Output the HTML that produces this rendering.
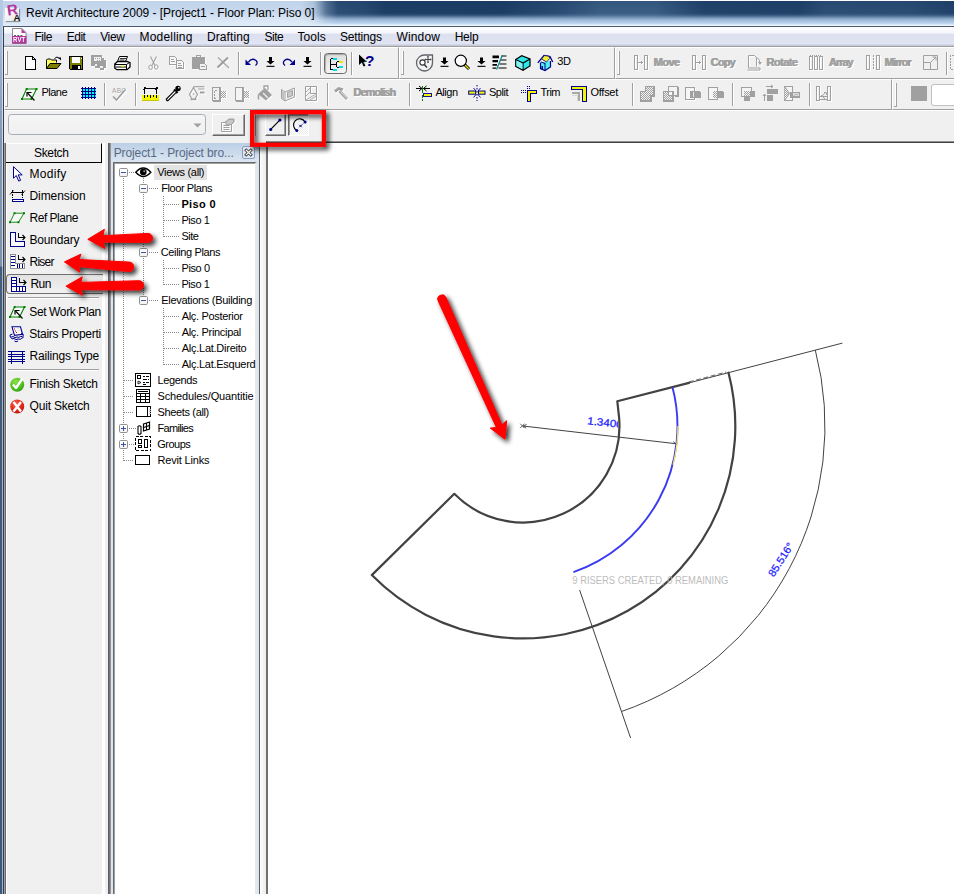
<!DOCTYPE html>
<html><head><meta charset="utf-8"><title>Revit Architecture 2009 - [Project1 - Floor Plan: Piso 0]</title>
<style>
*{box-sizing:border-box}
html,body{margin:0;padding:0}
body{width:954px;height:894px;overflow:hidden;position:relative;background:#f0f0f0;font-family:"Liberation Sans",sans-serif;font-size:12px;color:#000}
.a{position:absolute}
.t{position:absolute;white-space:nowrap}
svg{position:absolute;overflow:visible}
#title{left:0;top:0;width:954px;height:26px;background:linear-gradient(to bottom,#fff 0,#fff 1px,#35587f 1.5px,#3d6088 13px,#4a6d95 15px,#9db8d6 20px,#c3dbf4 24px,#e8f1fb 25px,#f4f8fd 26px)}
#titlex{left:0;top:1px;width:954px;height:17px;background:linear-gradient(to right,rgba(16,48,88,0) 312px,rgba(12,44,84,.3) 330px,rgba(12,44,84,.42) 365px,rgba(12,44,84,.64) 385px,rgba(12,44,84,.66) 500px,rgba(12,44,84,.35) 560px,rgba(16,48,88,.04) 600px,rgba(16,48,88,.04) 655px,rgba(12,44,84,.55) 705px,rgba(12,44,84,.58) 800px,rgba(16,48,88,.35) 825px,rgba(16,48,88,.4) 910px,rgba(12,44,84,.55) 954px);-webkit-mask-image:linear-gradient(to bottom,#000 0,#000 72%,transparent 100%)}
#glow{left:0;top:1px;width:380px;height:25px;background:linear-gradient(to bottom,#c0d3ea 0,#c8d9ee 10px,#d8e5f4 18px,#e0ebf7 24px);-webkit-mask-image:linear-gradient(to right,#000 0,#000 300px,rgba(0,0,0,.85) 314px,rgba(0,0,0,.25) 326px,transparent 338px)}
#lb{left:0;top:0;width:3px;height:894px;background:linear-gradient(to bottom,#b5cbe6 0,#b0c5e0 26px,#9db1cc 60px,#8497b2 140px,#8092aa 266px,#455d7d 267px,#435b7b 480px,#3f5878 894px)}
#lb2{left:2px;top:26px;width:1px;height:868px;background:linear-gradient(to bottom,#d0dae8 0,#ccd6e2 240px,#a8b6c8 242px,#a4b4cc 100%)}
#wb{left:3px;top:26px;width:951px;height:868px;border-left:1px solid #2d3e55;border-top:1px solid #4a5a72}
#menu{left:4px;top:27px;width:950px;height:19px;background:linear-gradient(to bottom,#fff 0,#f3f5fb 6px,#dcdfef 7.5px,#e1e4f2 17px,#c5c9d9 18px,#c5c9d9 19px)}
.band{position:absolute;border-top:1px solid #fff;border-left:1px solid #fff;border-bottom:1px solid #a0a0a0;border-right:1px solid #a0a0a0}
.grip{position:absolute;width:3px;height:24px;border-right:1px solid #a0a0a0;border-bottom:1px solid #a0a0a0;border-left:0;background:linear-gradient(to right,transparent 0,transparent 1px,#fff 1px,#fff 2px)}
.sep{position:absolute;width:2px;height:23px;border-left:1px solid #a0a0a0;border-right:1px solid #fff}
.hsep{position:absolute;height:2px;border-top:1px solid #a0a0a0;border-bottom:1px solid #fff}
.btn{position:absolute;border:1px solid;border-color:#fff #696969 #696969 #fff;background:#f0f0f0;box-shadow:inset -1px -1px 0 #a0a0a0}

</style></head><body>
<div class="a" id="title"></div>
<div class="a" id="titlex"></div>
<div class="a" id="glow"></div>
<div class="a" id="lb"></div><div class="a" id="lb2"></div>
<div class="a" id="wb"></div>
<div class="a" id="menu"></div>
<!-- toolbars -->
<div class="a" style="left:4px;top:46px;width:950px;height:1px;background:#a0a0a0"></div>
<div class="band" style="left:4px;top:47px;width:395px;height:32px"></div>
<div class="band" style="left:399px;top:47px;width:216px;height:32px"></div>
<div class="band" style="left:615px;top:47px;width:346px;height:32px"></div>
<div class="band" style="left:4px;top:79px;width:888px;height:31px"></div>
<div class="band" style="left:892px;top:79px;width:70px;height:31px"></div>
<div class="a" style="left:4px;top:110px;width:950px;height:1px;background:#fff"></div>
<div class="grip" style="left:5px;top:51px"></div>
<div class="grip" style="left:401px;top:51px"></div>
<div class="grip" style="left:617px;top:51px"></div>
<div class="grip" style="left:5px;top:83px"></div>
<div class="grip" style="left:894px;top:83px"></div>
<div class="sep" style="left:138px;top:52px"></div>
<div class="sep" style="left:238px;top:52px"></div>
<div class="sep" style="left:320px;top:52px"></div>
<div class="sep" style="left:351px;top:52px"></div>
<div class="sep" style="left:946px;top:52px"></div>
<div class="sep" style="left:104px;top:83px"></div>
<div class="sep" style="left:135px;top:83px"></div>
<div class="sep" style="left:327px;top:83px"></div>
<div class="sep" style="left:409px;top:83px"></div>
<div class="sep" style="left:632px;top:83px"></div>
<div class="sep" style="left:732px;top:83px"></div>
<div class="sep" style="left:809px;top:83px"></div>
<!-- options bar -->
<div class="a" style="left:8px;top:114px;width:198px;height:21px;border:1px solid #a6afb8;border-radius:3.5px;background:linear-gradient(#f5f5f5,#f0f0f0)"></div>
<svg style="left:193px;top:123px" width="9" height="5"><path d="M0.5 0.5h8l-4 4z" fill="#a0a0a0"/></svg>
<div class="btn" style="left:212px;top:114px;width:33px;height:22px"></div>
<div class="a" style="left:255px;top:114px;width:2px;height:22px;border-left:1px solid #a0a0a0;border-right:1px solid #fff"></div>
<div class="btn" style="left:265px;top:114px;width:21px;height:22px"></div>
<div class="a" style="left:288px;top:114px;width:21px;height:22px;border:1px solid;border-color:#696969 #fff #fff #696969;background:#f8f8f8;box-shadow:inset 1px 1px 0 #a0a0a0"></div>
<!-- sketch panel -->
<div class="a" style="left:4px;top:143px;width:2px;height:751px;background:linear-gradient(to right,#9e9e9e 0,#9e9e9e 50%,#6a6a6a 50%)"></div>
<div class="a" style="left:6px;top:143px;width:1px;height:751px;background:#fff"></div>
<div class="a" style="left:6px;top:143px;width:96px;height:20px;border-top:1px solid #fff;border-right:1px solid #000;border-bottom:1px solid #000;background:#f0f0f0"></div>
<div class="a" style="left:102px;top:143px;width:3px;height:751px;background:#fff"></div>
<div class="a" style="left:6px;top:274px;width:97px;height:20px;border:1px solid #707070;border-right:0;border-radius:4px 0 0 4px;background:linear-gradient(#e2e2e2,#f2f2f2)"></div>
<div class="hsep" style="left:8px;top:297px;width:91px"></div>
<div class="hsep" style="left:8px;top:369px;width:91px"></div>
<!-- splitter -->
<div class="a" style="left:108px;top:143px;width:3px;height:751px;background:linear-gradient(to right,#555,#777 60%,#aaa)"></div>
<!-- browser -->
<div class="a" style="left:111px;top:143px;width:148px;height:751px;background:#dbe6f4"></div>
<div class="a" style="left:111px;top:143px;width:148px;height:19px;background:linear-gradient(#bccfe5,#dbe6f2)"></div>
<div class="a" style="left:113px;top:162px;width:144px;height:740px;border:1px solid #696969;border-right:2px solid #e8e8e8;background:#fff;box-shadow:inset 1px 1px 0 #a0a0a0"></div>
<div class="a" style="left:242px;top:146px;width:13px;height:13px;border:1px solid #8e9cbc;border-radius:2px;background:#dde6f2"></div>
<svg style="left:242px;top:146px" width="13" height="13"><path d="M4.3 4.3l4.4 4.4M8.700 4.3l-4.4 4.4" stroke="#3a3a3a" stroke-width="3" stroke-linecap="square"/><path d="M4.3 4.3l4.4 4.4M8.700 4.3l-4.4 4.4" stroke="#fff" stroke-width="1.300" stroke-linecap="square"/></svg>
<div class="a" style="left:259px;top:143px;width:1px;height:751px;background:#606060"></div>
<div class="a" style="left:260px;top:143px;width:6px;height:751px;background:linear-gradient(to right,#fff,#f4f4f4 50%,#ececec)"></div>
<!-- views(all) highlight -->
<div class="a" style="left:154px;top:165px;width:53px;height:15px;background:#e3e3e3"></div>

<div class="a" style="left:266px;top:141px;width:688px;height:753px;background:#fff;border-left:2px solid #707070;border-top:1px solid #909090"></div>
<div class="a" style="left:266px;top:142px;width:688px;height:1px;background:#404040"></div>
<svg style="left:0;top:0" width="954" height="894" viewBox="0 0 954 894">
<path d="M689.0 382.9 L617.3 401.2 L619.1 417.6 A96.5 96.5 0 0 1 454.3 493.8 L371.8 575.1 A212.3 212.3 0 0 0 728.5 372.7" fill="none" stroke="#424242" stroke-width="2.2" stroke-linejoin="round" stroke-linecap="round"/>
<path d="M689.0 382.9 L842.4 343.1" stroke="#424242" stroke-width="1" fill="none"/>
<path d="M688.8 382.0 L726.3 372.0" stroke="#555" stroke-width="0.9" stroke-dasharray="5 2.5" fill="none"/>
<path d="M579.6 590.0 L630.6 738.0" stroke="#424242" stroke-width="1" fill="none"/>
<path d="M815.3 350.1 A302.0 302.0 0 0 1 621.5 711.5" stroke="#424242" stroke-width="1" fill="none"/>
<path d="M672.5 387.2 A154.5 154.5 0 0 1 573.4 572.1" stroke="#3a3af0" stroke-width="1.9" fill="none"/>
<path d="M678.0 426.0 A155.0 155.0 0 0 1 673.1 464.8" stroke="#f4e66a" stroke-width="1.3" fill="none"/>
<path d="M523.0 426.0 L675.8 443.7" stroke="#424242" stroke-width="1" fill="none"/>
<path d="M520.2 423.7l4.2 4.4M520.2 428.1l4.2 -4.4" stroke="#555" stroke-width="0.9" fill="none"/>
<path d="M526.6 424.4L523.3 426.0L526.2 428.2" stroke="#424242" stroke-width="0.9" fill="none"/>
<path d="M673.3 441.7L675.8 443.7" stroke="#424242" stroke-width="0.9" fill="none"/>
<defs><clipPath id="c1"><path d="M560 400H616.2L618.6 430H560z"/></clipPath></defs>
<g clip-path="url(#c1)"><text transform="translate(587 424.2) rotate(6.3)" font-family="'Liberation Sans',sans-serif" font-size="10.5" fill="#1a1aff" stroke="#1a1aff" stroke-width="0.25" textLength="35.5" lengthAdjust="spacingAndGlyphs">1.3400</text></g>
<text transform="translate(773.8 577.6) rotate(-57.5)" font-family="'Liberation Sans',sans-serif" font-size="10.5" fill="#1a1aff" stroke="#1a1aff" stroke-width="0.25" textLength="38" lengthAdjust="spacingAndGlyphs">85.516°</text>
<text x="572.3" y="583.8" font-family="'Liberation Sans',sans-serif" font-size="10" fill="#bdbdbd" textLength="156" lengthAdjust="spacingAndGlyphs">9 RISERS CREATED, 0 REMAINING</text>
</svg>

<svg width="0" height="0" style="left:0;top:0"><defs><pattern id="dz" width="2" height="2" patternUnits="userSpaceOnUse"><rect width="2" height="2" fill="#a0a0a0"/><rect width="1" height="1" fill="#f4f4f4"/><rect x="1" y="1" width="1" height="1" fill="#f4f4f4"/></pattern></defs></svg>
<svg style="left:10.5px;top:28px" width="16" height="16"><path d="M1.5 0.5h9.5l4 4v11h-13.5z" fill="#fff" stroke="#8a8a8a"/><path d="M10.5 0.5l4.5 4.5h-4.5z" fill="#b43ca0" stroke="none"/><rect x="1" y="8" width="14.5" height="7.5" fill="#b2379c"/><path d="M3 7.5h9" stroke="#666" stroke-dasharray="2 1.2"/></svg>
<div class="t" style="left:12.7px;top:36.4px;font-size:7px;line-height:8px;font-weight:700;color:#fff;letter-spacing:0.2px;transform:scaleX(.86);transform-origin:0 0">RVT</div>
<div class="a" style="left:5px;top:8px;width:14px;height:13px;background:linear-gradient(135deg,#fff,#e4e4e4);box-shadow:1px 1px 1px rgba(0,0,0,.35)"></div>
<div class="t" style="left:7px;top:2px;font-size:15px;line-height:15px;font-weight:700;color:#b436a0;transform:rotate(-8deg)">R</div>
<div class="t" style="left:13.5px;top:12.5px;font-size:9.5px;line-height:9px;font-weight:700;color:#111">A</div>
<svg style="left:25px;top:56px" width="12" height="14" shape-rendering="crispEdges"><path d="M0.5 0.5h7l3 3v9.5h-10z" fill="#fff" stroke="#000"/><path d="M7.5 0.5v3h3" fill="none" stroke="#000"/></svg>
<svg style="left:46px;top:55px" width="16" height="15"><path d="M0.5 13.5v-8.5l1-1h3l1 1h5v2.5" fill="#ffff66" stroke="#000"/><path d="M0.5 13.5l3.5-5h11l-4 5z" fill="#808000" stroke="#000"/><path d="M8.5 3.5q2.5-3 5 0" fill="none" stroke="#000"/><path d="M12 2.5h3v3z" fill="#000"/></svg>
<svg style="left:69px;top:56px" width="15" height="15" shape-rendering="crispEdges"><path d="M0.5 0.5h13v13h-12l-1-1z" fill="#808000" stroke="#000"/><rect x="3" y="1" width="8" height="6" fill="#fff"/><rect x="3" y="9" width="9" height="5" fill="#000"/><rect x="9" y="10" width="2" height="3" fill="#fff"/><rect x="12" y="1.5" width="1" height="1" fill="#fff"/></svg>
<svg style="left:91px;top:55px" width="18" height="17" shape-rendering="crispEdges"><g transform="translate(1 1)" stroke="#fff" fill="#fff" color="#fff"><path d="M0 0h11v3h2v2h2v8h-2v2h-4v-2h-5v-2h-4z" stroke="none"/></g><g stroke="#a0a0a0" fill="#a0a0a0" color="#a0a0a0"><path d="M0 0h11v3h2v2h2v8h-2v2h-4v-2h-5v-2h-4z" stroke="none"/></g><path d="M3 2h7v4h-7zM4 9h2v2h-2zM9 11h3v1.5h-3z" fill="#f0f0f0"/><path d="M4 3.5h5M6 5h3" stroke="#a0a0a0" stroke-dasharray="1 1"/></svg>
<svg style="left:114px;top:56px" width="17" height="15"><path d="M3.5 5.5l2-5h8l-2 5z" fill="#fff" stroke="#000"/><path d="M6 2.5h6M5.5 4h5" stroke="#000" stroke-width=".8" fill="none"/><path d="M0.8 8l2.7-2.5h9.5l3 1.2v4.3l-3 2.7h-10l-2.2-1.5z" fill="#fff" stroke="#000" stroke-width="1.3"/><path d="M1 8.5h11.5l3-2M12.5 8.5v5" stroke="#000" fill="none"/><path d="M1.5 11h11" stroke="#000" stroke-width="1"/><rect x="7" y="9.6" width="3.2" height="1.2" fill="#e6e600"/></svg>
<svg style="left:148px;top:56px" width="12" height="15"><g transform="translate(1 1)" stroke="#fff" fill="#fff" color="#fff"><path d="M2.5 0.5l4.5 9M8.5 0.5l-4.5 9" fill="none" stroke-width="1.1"/><ellipse cx="2.6" cy="11.3" rx="1.8" ry="2.2" fill="none" stroke-width="1"/><ellipse cx="8.2" cy="11" rx="1.8" ry="2.2" fill="none" stroke-width="1"/></g><g stroke="#a0a0a0" fill="#a0a0a0" color="#a0a0a0"><path d="M2.5 0.5l4.5 9M8.5 0.5l-4.5 9" fill="none" stroke-width="1.1"/><ellipse cx="2.6" cy="11.3" rx="1.8" ry="2.2" fill="none" stroke-width="1"/><ellipse cx="8.2" cy="11" rx="1.8" ry="2.2" fill="none" stroke-width="1"/></g></svg>
<svg style="left:169px;top:56px" width="17" height="14" shape-rendering="crispEdges"><g transform="translate(1 1)"><path d="M0.5 0.5h5l2 2v6h-7zM7.5 4.5h5l2 2v6h-7z" fill="#fff" stroke="#fff"/></g><path d="M0.5 0.5h5l2 2v6h-7zM7.5 4.500h5l2 2v6h-7z" fill="#f8f8f8" stroke="#a0a0a0"/><path d="M2 3.500h3M2 5.500h4M9 7.500h3M9 9.500h4M9 11.500h4" stroke="#a0a0a0"/></svg>
<svg style="left:191px;top:54px" width="18" height="17" shape-rendering="crispEdges"><g transform="translate(1 1)" stroke="#fff" fill="#fff" color="#fff"><path d="M1 3h4v-2h5v2h4v6h-6v6h-7z" stroke="none"/></g><g stroke="#a0a0a0" fill="#a0a0a0" color="#a0a0a0"><path d="M1 3h4v-2h5v2h4v6h-6v6h-7z" stroke="none"/></g><path d="M8.5 9.500h5l2 2v3.500h-7z" fill="#f0f0f0" stroke="#a0a0a0"/><path d="M10 12.500h4" stroke="#a0a0a0"/><path d="M6 2.500h3" stroke="#f0f0f0"/></svg>
<svg style="left:216px;top:56px" width="15" height="13"><g transform="translate(1 1)" stroke="#fff" fill="#fff" color="#fff"><path d="M1.5 11.500l10.5-10" fill="none" stroke-width="2.2"/><path d="M2 1.500l11 10.5" fill="none" stroke-width="1.1"/></g><g stroke="#a0a0a0" fill="#a0a0a0" color="#a0a0a0"><path d="M1.5 11.500l10.5-10" fill="none" stroke-width="2.2"/><path d="M2 1.500l11 10.5" fill="none" stroke-width="1.1"/></g></svg>
<svg style="left:245px;top:58px" width="14" height="9"><path d="M0.5 1.500v5.500h5.500z" fill="#00008c"/><path d="M3.5 4q3.5-4.5 7.5-1.500q2.5 2.5-.5 5" fill="none" stroke="#00008c" stroke-width="1.3"/></svg>
<svg style="left:266px;top:57px" width="9" height="10"><path d="M3 0h3v4h2.500l-4 3.500l-4-3.500h2.500z" fill="#000"/><rect x="0.5" y="8.8" width="8" height="1.1" fill="#000"/></svg>
<svg style="left:282px;top:58px" width="14" height="9"><path d="M13 1.500v5.500h-5.500z" fill="#00008c"/><path d="M10 4q-3.5-4.5-7.5-1.500q-2.5 2.5.5 5" fill="none" stroke="#00008c" stroke-width="1.3"/></svg>
<svg style="left:303px;top:57px" width="9" height="10"><path d="M3 0h3v4h2.500l-4 3.500l-4-3.500h2.500z" fill="#000"/><rect x="0.5" y="8.8" width="8" height="1.1" fill="#000"/></svg>
<div class="a" style="left:324px;top:53px;width:23px;height:21px;border:1px solid #6a6a6a;border-radius:3.500px;background:linear-gradient(#dcdcdc,#ececec 60%,#f4f4f4);box-shadow:inset 1px 1px 1px rgba(0,0,0,.25)"></div>
<svg style="left:329px;top:57px" width="16" height="14" shape-rendering="crispEdges"><path d="M1.5 1.500v11M1.5 1.500h3M1.5 12.500h3M1.5 7h6M7.5 4.500v5.500M7.5 4.500h3M7.5 10h3" fill="none" stroke="#000"/><rect x="4" y="0.5" width="3.5" height="2" fill="#00e0e0"/><rect x="4" y="11.5" width="3.5" height="2" fill="#00e0e0"/><rect x="10" y="3.5" width="4" height="2" fill="#e8e800"/><rect x="10" y="9" width="4" height="2" fill="#00e0e0"/><rect x="8" y="6" width="3" height="2" fill="#fff"/></svg>
<svg style="left:358px;top:54px" width="18" height="16"><path d="M1 0.500v10.500l2.8-2.500l1.8 4l1.8-.8l-1.8-3.700h3.500z" fill="#000"/><path d="M5 9.500l4-4" stroke="#2aa" stroke-width=".8"/></svg>
<div class="t" style="left:365px;top:52.5px;font-size:15.5px;line-height:16px;font-weight:700;color:#00008c">?</div>
<svg style="left:416px;top:54px" width="18" height="17"><path d="M9 1h7.500v7.500a8 8 0 1 1-7.5-7.500z" fill="#f4f4f4" stroke="#60656c" stroke-width="1.3"/><circle cx="6.5" cy="8.5" r="2.6" fill="#fff" stroke="#333" stroke-width="1.1"/><path d="M8.3 10.500l2.7 3" stroke="#333" stroke-width="1.5"/><path d="M12 2.500v6M9 5.500h6" stroke="#444" stroke-width="1"/><path d="M12 1.800l-1.2 1.400h2.400zM12 9.200l-1.2-1.400h2.400zM8.3 5.500l1.4-1.200v2.400zM15.7 5.500l-1.4-1.200v2.400z" fill="#444"/></svg>
<svg style="left:440px;top:57px" width="9" height="10"><path d="M3 0.500h3v3.500h2.500l-4 3.500l-4-3.500h2.500z" fill="#000"/><rect x="0.5" y="8.8" width="8" height="1.1" fill="#000"/></svg>
<svg style="left:454px;top:54px" width="17" height="17"><path d="M10.5 10.500l4.5 4.5" stroke="#000" stroke-width="3"/><path d="M11 11l3.7 3.7" stroke="#e8e800" stroke-width="1.3"/><circle cx="6.8" cy="6.8" r="5.6" fill="#fcfcff" stroke="#000" stroke-width="1.2"/></svg>
<svg style="left:476.5px;top:57px" width="9" height="10"><path d="M3 0.500h3v3.500h2.500l-4 3.500l-4-3.500h2.500z" fill="#000"/><rect x="0.5" y="8.8" width="8" height="1.1" fill="#000"/></svg>
<svg style="left:492px;top:55px" width="16" height="15"><path d="M0.5 0.500h6.500v2.800h-6.500zM0.5 5h5.500v2.300h-5.500zM0.5 9h4.500v1.800h-4.500zM0.5 12.500h3.500v1.200h-3.500z" fill="#000"/><path d="M9.5 1h5M8.5 5h6M7.5 9h7M6.5 13h8" stroke="#000" stroke-width="1"/><path d="M10.5 0l-6 14.5" stroke="#188" stroke-width="1.3"/></svg>
<svg style="left:515px;top:55px" width="16" height="16"><path d="M0.7 4.500l6-3.800l8.3 3.300v7l-7 4.300l-7.3-4z" fill="#30e6e6" stroke="#000" stroke-width="1.2"/><path d="M0.7 4.500l7.3 3.500l7-4M8 8v7.3" fill="none" stroke="#000" stroke-width="1.2"/><path d="M1.5 5.500l6 3v5.800l-6-3.300z" fill="#8ee"/></svg>
<svg style="left:537px;top:54px" width="17" height="17"><path d="M3.5 8.500v6l4.5 2l5.5-3.500v-6" fill="#5ee" stroke="#00008c" stroke-width="1.2"/><path d="M0.8 8.800l6.2-7.300l6 1l2.7 5.5" fill="none" stroke="#00008c" stroke-width="1.3"/><path d="M7.5 1.500l-3 3.500l5 3l3.2-3.500l-0.7-2.200z" fill="#f0f030" stroke="#00008c" stroke-width=".8"/><path d="M8 9v7.300M4 8l4 1.5" stroke="#00008c" stroke-width="1"/><rect x="4.5" y="12" width="1.5" height="3.5" fill="#00008c"/></svg>
<svg style="left:634px;top:55px" width="16" height="16" shape-rendering="crispEdges"><g transform="translate(1 1)" stroke="#fff" fill="#fff" color="#fff"><path d="M0.5 0.500h3v14h-3zM10.5 0.500h3v14h-3z" fill="none"/><path d="M4 7.500h5" fill="none"/><path d="M6.5 5v5l2.5-2.500z" stroke="none"/></g><g stroke="#a0a0a0" fill="#a0a0a0" color="#a0a0a0"><path d="M0.5 0.500h3v14h-3zM10.5 0.500h3v14h-3z" fill="none"/><path d="M4 7.500h5" fill="none"/><path d="M6.5 5v5l2.5-2.500z" stroke="none"/></g></svg>
<svg style="left:692px;top:55px" width="16" height="16" shape-rendering="crispEdges"><g transform="translate(1 1)" stroke="#fff" fill="#fff" color="#fff"><path d="M0.5 0.500h3v14h-3zM10.5 0.500h3v14h-3z" fill="none"/><path d="M4 7.500h5" fill="none"/><path d="M6.5 5v5l2.5-2.500z" stroke="none"/></g><g stroke="#a0a0a0" fill="#a0a0a0" color="#a0a0a0"><path d="M0.5 0.500h3v14h-3zM10.5 0.500h3v14h-3z" fill="none"/><path d="M4 7.500h5" fill="none"/><path d="M6.5 5v5l2.5-2.500z" stroke="none"/></g></svg>
<svg style="left:747px;top:54px" width="17" height="17"><g transform="translate(1 1)" stroke="#fff" fill="#fff" color="#fff"><path d="M1.5 1.500h6l2 2v9" fill="none"/><path d="M1.5 1.500v12.500h11.500v2h-12.5" fill="none"/><path d="M9.5 3.500q3 1 3.5 5" fill="none"/><path d="M11 8h4l-2 3z" stroke="none"/></g><g stroke="#a0a0a0" fill="#a0a0a0" color="#a0a0a0"><path d="M1.5 1.500h6l2 2v9" fill="none"/><path d="M1.5 1.500v12.500h11.500v2h-12.5" fill="none"/><path d="M9.5 3.500q3 1 3.5 5" fill="none"/><path d="M11 8h4l-2 3z" stroke="none"/></g></svg>
<svg style="left:809px;top:55px" width="17" height="16" shape-rendering="crispEdges"><g transform="translate(1 1)" stroke="#fff" fill="#fff" color="#fff"><path d="M0.5 1.500h3v13h-3zM5.5 1.500h3v13h-3zM10.5 1.500h3v13h-3z" fill="none"/><path d="M1 0.500h12" fill="none" stroke-dasharray="1 1"/></g><g stroke="#a0a0a0" fill="#a0a0a0" color="#a0a0a0"><path d="M0.5 1.500h3v13h-3zM5.5 1.500h3v13h-3zM10.5 1.500h3v13h-3z" fill="none"/><path d="M1 0.500h12" fill="none" stroke-dasharray="1 1"/></g></svg>
<svg style="left:866px;top:55px" width="16" height="16" shape-rendering="crispEdges"><g transform="translate(1 1)" stroke="#fff" fill="#fff" color="#fff"><path d="M0.5 0.500h3v14h-3zM10.5 0.500h3v14h-3z" fill="none"/><path d="M7 0v15" fill="none" stroke-dasharray="2 1"/></g><g stroke="#a0a0a0" fill="#a0a0a0" color="#a0a0a0"><path d="M0.5 0.500h3v14h-3zM10.5 0.500h3v14h-3z" fill="none"/><path d="M7 0v15" fill="none" stroke-dasharray="2 1"/></g></svg>
<svg style="left:923px;top:55px" width="16" height="15"><g fill="none" stroke="#a0a0a0"><path d="M0.5 0.500h14v14h-14z"/><path d="M0.5 7.500h7v7"/><path d="M8 7l5-5M9.5 2h3.500v3.5"/></g></svg>
<svg style="left:950px;top:55px" width="5" height="16" shape-rendering="crispEdges"><path d="M4 0.500h-3.500v14h3.5" fill="none" stroke="#a0a0a0" stroke-dasharray="2 1"/></svg>
<svg style="left:21px;top:88px" width="17" height="13"><path d="M5.5 1l10 0l-5 10l-9.5 0z" fill="#f8f8f8" stroke="#008000" stroke-width="1.1"/><g fill="#008000"><rect x="4.7" y="0" width="2" height="2"/><rect x="14.5" y="0" width="2" height="2"/><rect x="9.5" y="10" width="2" height="2"/><rect x="0" y="10" width="2" height="2"/></g><path d="M13.5 12.500l-7-7.5" stroke="#000" stroke-width="1.1"/><path d="M6 8.500v-4h4.5" fill="none" stroke="#000" stroke-width="1.2"/></svg>
<svg style="left:81px;top:87px" width="15" height="12" shape-rendering="crispEdges"><rect x="1" y="1" width="14" height="10" fill="#00f8ff"/><rect x="1" y="0" width="1" height="12" fill="#000084"/><rect x="4" y="0" width="1" height="12" fill="#000084"/><rect x="7" y="0" width="1" height="12" fill="#000084"/><rect x="10" y="0" width="1" height="12" fill="#000084"/><rect x="13" y="0" width="1" height="12" fill="#000084"/><rect x="0" y="1" width="15" height="1" fill="#000084"/><rect x="0" y="4" width="15" height="1" fill="#000084"/><rect x="0" y="7" width="15" height="1" fill="#000084"/><rect x="0" y="10" width="15" height="1" fill="#000084"/></svg>
<div class="t" style="left:112px;top:86.500px;font-size:6.500px;line-height:7px;color:#a0a0a0;letter-spacing:.3px;text-shadow:1px 1px 0 #fff">ABC</div>
<svg style="left:112px;top:88px" width="16" height="14"><g transform="translate(1 1)" stroke="#fff" fill="#fff" color="#fff"><path d="M1 8.500l3.5 3.500l9-10.5" fill="none" stroke-width="1.7"/></g><g stroke="#a0a0a0" fill="#a0a0a0" color="#a0a0a0"><path d="M1 8.500l3.5 3.500l9-10.5" fill="none" stroke-width="1.7"/></g></svg>
<svg style="left:142px;top:85px" width="17" height="16" shape-rendering="crispEdges"><path d="M1.5 3.500h14" stroke="#000"/><path d="M2.5 1.500v7M14.5 1.500v7" stroke="#000"/><path d="M1 5l3-3M13 5l3-3" stroke="#000" stroke-width=".9" shape-rendering="auto"/><rect x="0" y="10" width="16.5" height="5.5" fill="#f4f400"/><path d="M2.5 10v3M5.5 10v2M8.5 10v3M11.5 10v2M14.5 10v3" stroke="#000"/><path d="M0 15.500h16.5" stroke="#c8c800"/></svg>
<svg style="left:166px;top:85px" width="16" height="16"><circle cx="12" cy="3.5" r="2.7" fill="#000"/><path d="M8 4.500l3.5 3.5" stroke="#000" stroke-width="2.2"/><path d="M9.5 6.500l-8 8" stroke="#000" stroke-width="3.4" stroke-linecap="round"/><path d="M9 7l-7.3 7.3" stroke="#fff" stroke-width="1.2" stroke-linecap="round"/><circle cx="12.8" cy="2.7" r=".8" fill="#fff"/></svg>
<svg style="left:189px;top:86px" width="17" height="16"><g transform="translate(1 1)" stroke="#fff" fill="#fff" color="#fff"><path d="M4.5 1.500l4 7l-2.5 4.500h-3l-2.5-4.500z" fill="none" stroke-width="1.2"/><path d="M1.5 13.500h6" fill="none" stroke-width="1.4"/><path d="M4.5 0.700h11" fill="none" stroke-width="1.2"/><path d="M9 3h6.500M11 6h4.500M11 7h4.5" fill="none" stroke-width="1.2"/></g><g stroke="#a0a0a0" fill="#a0a0a0" color="#a0a0a0"><path d="M4.5 1.500l4 7l-2.5 4.500h-3l-2.5-4.500z" fill="none" stroke-width="1.2"/><path d="M1.5 13.500h6" fill="none" stroke-width="1.4"/><path d="M4.5 0.700h11" fill="none" stroke-width="1.2"/><path d="M9 3h6.500M11 6h4.500M11 7h4.5" fill="none" stroke-width="1.2"/></g><circle cx="4.5" cy="8" r=".8" fill="#a0a0a0"/></svg>
<svg style="left:212px;top:87px" width="16" height="16" shape-rendering="crispEdges"><path d="M1.5 1.500h8v13h-8z" fill="none" stroke="#fff"/><path d="M0.5 0.500h8v13h-8z" fill="#f0f0f0" stroke="#a0a0a0"/><path d="M8 1v13h-7" fill="none" stroke="#a0a0a0" stroke-width="2"/><path d="M5 3.500h-2.500v7.500h2.5" fill="none" stroke="#a0a0a0" stroke-dasharray="2 1"/><rect x="9" y="3.5" width="5" height="7" fill="url(#dz)"/><path d="M9 11.500h5.500v-7.5" fill="none" stroke="#fff"/></svg>
<svg style="left:235px;top:87px" width="16" height="16" shape-rendering="crispEdges"><path d="M1.5 1.500h8v13h-8z" fill="none" stroke="#fff"/><path d="M0.5 0.500h8v13h-8z" fill="#f4f4f4" stroke="#a0a0a0"/><path d="M8 1v13h-7" fill="none" stroke="#a0a0a0" stroke-width="2"/><rect x="9" y="3.5" width="5" height="7" fill="url(#dz)"/><path d="M9 11.500h5.500v-7.5" fill="none" stroke="#fff"/></svg>
<svg style="left:257px;top:85px" width="18" height="17"><g transform="translate(1 1)" stroke="#fff" fill="#fff" color="#fff"><path d="M1 9l7-6l7 7l-6 5.500z" stroke="none"/><path d="M7 4v-3h4v4" fill="none" stroke-width="1.3"/></g><g stroke="#a0a0a0" fill="#a0a0a0" color="#a0a0a0"><path d="M1 9l7-6l7 7l-6 5.500z" stroke="none"/><path d="M7 4v-3h4v4" fill="none" stroke-width="1.3"/></g><path d="M1.5 9.500v5" stroke="#a0a0a0" stroke-width="1.5"/><path d="M6 8l5 5" stroke="#f0f0f0" stroke-width="1.2"/></svg>
<svg style="left:281px;top:86px" width="16" height="16"><g transform="translate(1 1)" stroke="#fff" fill="#fff" color="#fff"><path d="M0.5 3.500l3.5 2.500v9l-3.5-2.500zM4 6l9.5-4v9l-9.5 4" fill="none"/></g><g stroke="#a0a0a0" fill="#a0a0a0" color="#a0a0a0"><path d="M0.5 3.500l3.5 2.500v9l-3.5-2.500zM4 6l9.5-4v9l-9.5 4" fill="none"/></g><path d="M6.5 6.500l5-2v5l-5 2z" fill="#c8c8c8" stroke="#a0a0a0"/><path d="M1.5 5v8M2.5 6v8" stroke="#a0a0a0" stroke-width=".6"/></svg>
<svg style="left:305px;top:86px" width="13" height="16"><g transform="translate(1 1)" stroke="#fff" fill="#fff" color="#fff"><path d="M0.5 0.500h11v14h-11z" fill="none"/><path d="M5.5 0.500v7h6" fill="none"/></g><g stroke="#a0a0a0" fill="#a0a0a0" color="#a0a0a0"><path d="M0.5 0.500h11v14h-11z" fill="none"/><path d="M5.5 0.500v7h6" fill="none"/></g><path d="M1 6l4-4M1 10l4-4M1 14l10-6M5 14l6-4" stroke="#a0a0a0" stroke-width=".8"/></svg>
<svg style="left:333px;top:86px" width="16" height="15"><g transform="translate(1 1)" stroke="#fff" fill="#fff" color="#fff"><path d="M1 4.500l4.5-3.500l5 1.500l-1.5 2.500l-3-1l-3 2.500z" stroke="none"/><path d="M6.5 5l7.5 8" fill="none" stroke-width="2.6"/></g><g stroke="#a0a0a0" fill="#a0a0a0" color="#a0a0a0"><path d="M1 4.500l4.5-3.500l5 1.500l-1.5 2.500l-3-1l-3 2.500z" stroke="none"/><path d="M6.5 5l7.5 8" fill="none" stroke-width="2.6"/></g><path d="M7.5 5.500l6.5 7" stroke="#e8e8e8" stroke-width=".9"/></svg>
<svg style="left:416px;top:86px" width="16" height="15" shape-rendering="crispEdges"><path d="M6.5 4v11" stroke="#008000" stroke-dasharray="3 1.5"/><path d="M0 2.500h13.5" stroke="#000"/><path d="M3 0l3 2.500l-3 2.500M10.5 0l-3 2.500l3 2.5" fill="none" stroke="#000" stroke-width="1" shape-rendering="auto"/><rect x="7" y="7.5" width="8.5" height="3" fill="#f4f400" stroke="#00008c" stroke-width=".9"/><rect x="6" y="0" width="1.3" height="5" fill="#008000"/></svg>
<svg style="left:468px;top:85px" width="18" height="16"><rect x="0.7" y="6" width="7" height="3.2" fill="#f4f400" stroke="#00008c" stroke-width="1"/><rect x="10.5" y="6" width="6.5" height="3.2" fill="#f4f400" stroke="#00008c" stroke-width="1"/><path d="M9 0v16" stroke="#00008c" stroke-dasharray="1.5 1.5"/><path d="M5.5 3l2.5 3M12.5 3l-2.5 3M5.5 12.500l2.5-3M12.5 12.500l-2.5-3" stroke="#00008c" stroke-width=".9"/></svg>
<svg style="left:520px;top:85px" width="17" height="16" shape-rendering="crispEdges"><path d="M7 5.500h9v2.800h-6v7.700h-3z" fill="#f4f400" stroke="#00008c" stroke-width="1"/><path d="M0.5 5.500h6M0.5 7.500h6" stroke="#00008c" stroke-dasharray="1 1"/><path d="M7.5 0.500v4.500M9.5 0.500v4.5" stroke="#00008c" stroke-dasharray="1 1"/></svg>
<svg style="left:571px;top:86px" width="16" height="15" shape-rendering="crispEdges"><path d="M0.5 0.500h14.500v14.500h-3.300v-11.500h-11.200z" fill="#f4f400" stroke="#00008c" stroke-width="1"/><path d="M1 7h7v8" fill="none" stroke="#a8a8a8" stroke-width="1.5"/><path d="M1 9h5v6" fill="none" stroke="#d8d8d8" stroke-width="1"/></svg>
<svg style="left:639px;top:86px" width="17" height="16" shape-rendering="crispEdges"><path d="M6 0.500h9v9h-3v5h-11v-9h5z" fill="#fff" transform="translate(1 1)"/><path d="M6 0.500h9v9h-3v5h-11v-9h5z" fill="url(#dz)" stroke="#a0a0a0"/><path d="M14.5 1v8.500h-2.500v5h-11" fill="none" stroke="#a0a0a0" stroke-width="2"/></svg>
<svg style="left:662px;top:86px" width="17" height="16" shape-rendering="crispEdges"><path d="M6.5 0.500h9v9h-9z" fill="#f4f4f4" stroke="#a0a0a0"/><path d="M15.5 1v9h-3" fill="none" stroke="#a0a0a0" stroke-width="2"/><path d="M1 5.500h10v9h-10z" fill="url(#dz)" stroke="#a0a0a0"/><path d="M6.5 5.500h3.500v3.500h-3.500z" fill="#f8f8f8" stroke="#a0a0a0"/><path d="M11 7v8h-10" fill="none" stroke="#a0a0a0" stroke-width="1.5"/></svg>
<svg style="left:685px;top:86px" width="17" height="16" shape-rendering="crispEdges"><g transform="translate(1 1)"><path d="M0.5 1.500h9v12h-9z" fill="none" stroke="#fff"/></g><path d="M0.5 1.500h9v12h-9z" fill="#f6f6f6" stroke="#a0a0a0"/><path d="M5 4.500h8l2.5 1.500v6h-10.500z" fill="#a0a0a0"/><rect x="8" y="6" width="1.2" height="4.5" fill="#e8e8e8"/></svg>
<svg style="left:708px;top:86px" width="17" height="16" shape-rendering="crispEdges"><path d="M0.5 1.500h9v12h-9z" fill="#f6f6f6" stroke="#a0a0a0"/><path d="M5 4.500h8l2.5 1.500v6h-10.500z" fill="#a0a0a0"/><rect x="5" y="4.5" width="4" height="7" fill="url(#dz)"/></svg>
<svg style="left:740px;top:86px" width="16" height="16" shape-rendering="crispEdges"><path d="M1 1.500h10v8.500h-10z" fill="#f4f4f4" stroke="#a0a0a0"/><path d="M4 4.500h11v6h-5v4.500h-6z" fill="#a0a0a0"/><rect x="4" y="4.5" width="6" height="5" fill="url(#dz)"/></svg>
<svg style="left:763px;top:85px" width="16" height="17" shape-rendering="crispEdges"><path d="M3.5 3.500h11.500v5.500h-11.500zM3.5 10h6v6h-6z" fill="#a0a0a0"/><path d="M3 1.500h7M8 0l2 1.500l-2 1.500M1.5 16v-7M0 11l1.5-2l1.5 2" fill="none" stroke="#a0a0a0" shape-rendering="auto"/></svg>
<svg style="left:784px;top:86px" width="18" height="16" shape-rendering="crispEdges"><path d="M0.5 0.500h8v14h-8z" fill="#f4f4f4" stroke="#a0a0a0"/><path d="M0.5 0.500l5 7l-5 7" fill="url(#dz)" stroke="#a0a0a0" shape-rendering="auto"/><path d="M5.5 5.500h10.500v6h-10.500z" fill="#a0a0a0"/><path d="M9 7h6v3h-6z" fill="#e0e0e0"/><path d="M9.5 10l2-2l1.5 1l1.5-1.5" fill="none" stroke="#a0a0a0" stroke-width=".8" shape-rendering="auto"/></svg>
<svg style="left:816px;top:86px" width="17" height="16" shape-rendering="crispEdges"><g transform="translate(1 1)" stroke="#fff" fill="#fff" color="#fff"><path d="M0.5 0.500h3v14h-3zM11.5 0.500h3v14h-3z" fill="none"/></g><g stroke="#a0a0a0" fill="#a0a0a0" color="#a0a0a0"><path d="M0.5 0.500h3v14h-3zM11.5 0.500h3v14h-3z" fill="none"/></g><path d="M4 10.500h7M4 13.500h7" stroke="#a0a0a0"/><path d="M5 9l4 4M10 6l-5 5M8 6.500h2.500v2.5" fill="none" stroke="#a0a0a0" stroke-width=".9" shape-rendering="auto"/></svg>
<div class="a" style="left:911px;top:86px;width:16px;height:15px;background:#a0a0a0"></div>
<div class="a" style="left:931px;top:84px;width:30px;height:22px;border:1px solid #c0c0c0;border-radius:3px;background:#fff"></div>
<svg style="left:220px;top:117px" width="17" height="16"><g transform="translate(1 1)" stroke="#fff" fill="#fff" color="#fff"><path d="M1.5 5.500h10v9h-10z" fill="none"/><path d="M3.5 8.500h6M3.5 10.500h6M3.5 12.500h6" fill="none"/><path d="M5 5l4-3l5 0l0 3l-3 3" fill="none"/></g><g stroke="#a0a0a0" fill="#a0a0a0" color="#a0a0a0"><path d="M1.5 5.500h10v9h-10z" fill="none"/><path d="M3.5 8.500h6M3.5 10.500h6M3.5 12.500h6" fill="none"/><path d="M5 5l4-3l5 0l0 3l-3 3" fill="none"/></g><path d="M9 2.500h4.500v2.500l-2.5 2.500h-5v-2z" fill="#c8c8c8" stroke="#a0a0a0" stroke-width=".8"/></svg>
<svg style="left:268px;top:117px" width="16" height="16"><path d="M2.7 12.400l9.1-9.3" stroke="#000" stroke-width="1.2"/><circle cx="2.7" cy="12.5" r="1.6" fill="#00008c"/><circle cx="11.9" cy="3" r="1.6" fill="#00008c"/></svg>
<svg style="left:290px;top:116px" width="18" height="18" shape-rendering="crispEdges"><defs><pattern id="ck" width="2" height="2" patternUnits="userSpaceOnUse"><rect width="2" height="2" fill="#fff"/><rect width="1" height="1" fill="#ececec"/><rect x="1" y="1" width="1" height="1" fill="#ececec"/></pattern></defs><rect width="18" height="18" fill="url(#ck)"/></svg>
<svg style="left:292px;top:118px" width="16" height="16"><path d="M4.7 12.400a6.2 6.2 0 1 1 8.4-8.5" fill="none" stroke="#000" stroke-width="1.1"/><circle cx="4.8" cy="12.5" r="1.5" fill="#00008c"/><circle cx="13.1" cy="3.9" r="1.5" fill="#00008c"/><path d="M7.3 6.800l2.4 2.400M9.7 6.800l-2.4 2.4" stroke="#00008c" stroke-width="1"/><path d="M8.5 8l4-3.5" stroke="#00008c" stroke-width=".7" stroke-dasharray="1.5 1"/></svg>
<svg style="left:13px;top:166px" width="11" height="17"><path d="M0.5 0.700v11.500l2.8-2.700l2.4 5.600l1.9-.8l-2.4-5.400h4z" fill="#fff" stroke="#00008c" stroke-width="1"/></svg>
<svg style="left:9px;top:188px" width="17" height="15" shape-rendering="crispEdges"><path d="M2 4.500h13" stroke="#000"/><path d="M1 6.500l3.5-4M12.5 6.500l3.5-4" stroke="#000" stroke-width=".9" shape-rendering="auto"/><path d="M3.5 2v8M13.5 2v8" stroke="#000" stroke-dasharray="2 1.5"/><rect x="3" y="11.5" width="11" height="2" fill="#fff" stroke="#00008c" stroke-width="1"/></svg>
<svg style="left:9px;top:212px" width="17" height="12"><path d="M5.5 1.200h9.500l-5.5 9h-8.500z" fill="#f8f8f8" stroke="#008000" stroke-width=".9"/><g fill="#008000"><rect x="4.5" y="0.2" width="2" height="2"/><rect x="14" y="0.2" width="2" height="2"/><rect x="8.5" y="9.2" width="2" height="2"/><rect x="0" y="9.2" width="2" height="2"/></g></svg>
<svg style="left:10px;top:232px" width="16" height="15" shape-rendering="crispEdges"><path d="M0.5 0.500h5v9h9v5h-14z" fill="#fafafa" stroke="#00008c" stroke-width="1"/><path d="M8.5 0.500v5h6" fill="none" stroke="#000" stroke-width="1.1"/><path d="M12.5 3l2.5 2.500l-2.5 2.5" fill="none" stroke="#000" stroke-width="1.1" shape-rendering="auto"/></svg>
<svg style="left:10px;top:254px" width="16" height="15" shape-rendering="crispEdges"><path d="M0.5 0.500h5v9h9v5h-14z" fill="#fff" stroke="#909090" stroke-width="1"/><path d="M1 2.500h4M1 5.500h4M1 8.500h4M1 11.500h4" stroke="#00008c" stroke-width="1"/><path d="M7.5 10v4M9.5 10v4M12.5 10v4" stroke="#00008c" stroke-width="1"/><path d="M8.5 0.500v5h6" fill="none" stroke="#000" stroke-width="1.1"/><path d="M12.5 3l2.5 2.500l-2.5 2.5" fill="none" stroke="#000" stroke-width="1.1" shape-rendering="auto"/></svg>
<svg style="left:11px;top:277px" width="16" height="15" shape-rendering="crispEdges"><path d="M0.5 0.500h5v9h9v5h-14z" fill="#fff" stroke="#00008c" stroke-width="1"/><path d="M1 3.500h4.500M1 6.500h4.500M1 9.500h4.5" stroke="#00008c" stroke-width="1"/><path d="M5.5 9.500v5M8.5 9.500v5M11.5 9.500v5" stroke="#00008c" stroke-width="1"/><path d="M8.5 0.500v5h6" fill="none" stroke="#000" stroke-width="1.1"/><path d="M12.5 3l2.5 2.500l-2.5 2.5" fill="none" stroke="#000" stroke-width="1.1" shape-rendering="auto"/></svg>
<svg style="left:9px;top:306px" width="17" height="13"><path d="M5.5 1l10 0l-5 10l-9.5 0z" fill="#f8f8f8" stroke="#008000" stroke-width="1.1"/><g fill="#008000"><rect x="4.7" y="0" width="2" height="2"/><rect x="14.5" y="0" width="2" height="2"/><rect x="9.5" y="10" width="2" height="2"/><rect x="0" y="10" width="2" height="2"/></g><path d="M13.5 12.500l-7-7.5" stroke="#000" stroke-width="1.1"/><path d="M6 8.500v-4h4.5" fill="none" stroke="#000" stroke-width="1.2"/></svg>
<svg style="left:9px;top:326px" width="16" height="16"><path d="M3 0.800l8.5 0l2 7.500l-8 1z" fill="#fff" stroke="#00008c" stroke-width="1.1"/><path d="M3.5 8q-3.5.5-2.5 2.500q2 1 3 0q2 2 4 .5q2 1 3.5-.5q2.5.5 3-1.500q-.5-1.5-2.5-1.5" fill="none" stroke="#00008c" stroke-width="1"/><path d="M1.5 11.500q1.5 2 3.5 1q2 2 4 .5q2.5 1 4-1q1.5 0 1.5-1.5" fill="none" stroke="#00008c" stroke-width="1"/><path d="M5.5 15l1.5.8l2-.8" fill="none" stroke="#00008c" stroke-width="1"/><rect x="5" y="2.5" width="1" height="1" fill="#c00000"/><rect x="6" y="4.5" width="1" height="1" fill="#c00000"/><rect x="7" y="6" width="1" height="1" fill="#c00000"/><path d="M7.5 3h3M8.5 5h3" stroke="#d0d0d0" stroke-width=".8"/></svg>
<svg style="left:8px;top:350px" width="18" height="14" shape-rendering="crispEdges"><path d="M0 1.500h17M0 4.500h17M0 6.500h17M0 9.500h17M0 11.500h17" stroke="#00008c" stroke-width="1"/><path d="M3.5 1v13M14.5 1v13" stroke="#00008c" stroke-width="1"/></svg>
<svg style="left:10px;top:377px" width="15" height="15"><defs><radialGradient id="gg" cx=".4" cy=".3" r=".8"><stop offset="0" stop-color="#8ee04a"/><stop offset=".6" stop-color="#4ec020"/><stop offset="1" stop-color="#2e9a10"/></radialGradient></defs><circle cx="7.2" cy="7.7" r="7" fill="url(#gg)"/><path d="M3 7.500l3 3.500l6.5-9.5" fill="none" stroke="#fff" stroke-width="2.3" stroke-linejoin="round"/></svg>
<svg style="left:10px;top:399px" width="15" height="15"><defs><radialGradient id="rg" cx=".4" cy=".3" r=".8"><stop offset="0" stop-color="#f6604a"/><stop offset=".6" stop-color="#e02818"/><stop offset="1" stop-color="#b01008"/></radialGradient></defs><circle cx="7.2" cy="7.5" r="7" fill="url(#rg)"/><path d="M3.5 3l7.5 9.500M11 3l-7.5 9.5" fill="none" stroke="#fff" stroke-width="2.4"/></svg>
<div class="a" style="left:123px;top:178px;width:1px;height:283px;background:repeating-linear-gradient(to bottom,#888 0,#888 1px,transparent 1px,transparent 2px)"></div>
<div class="a" style="left:124px;top:380px;width:10px;height:1px;background:repeating-linear-gradient(to right,#888 0,#888 1px,transparent 1px,transparent 2px)"></div>
<div class="a" style="left:124px;top:396px;width:10px;height:1px;background:repeating-linear-gradient(to right,#888 0,#888 1px,transparent 1px,transparent 2px)"></div>
<div class="a" style="left:124px;top:412px;width:10px;height:1px;background:repeating-linear-gradient(to right,#888 0,#888 1px,transparent 1px,transparent 2px)"></div>
<div class="a" style="left:124px;top:460px;width:10px;height:1px;background:repeating-linear-gradient(to right,#888 0,#888 1px,transparent 1px,transparent 2px)"></div>
<div class="a" style="left:129px;top:172px;width:6px;height:1px;background:repeating-linear-gradient(to right,#888 0,#888 1px,transparent 1px,transparent 2px)"></div>
<div class="a" style="left:129px;top:428px;width:8px;height:1px;background:repeating-linear-gradient(to right,#888 0,#888 1px,transparent 1px,transparent 2px)"></div>
<div class="a" style="left:129px;top:444px;width:6px;height:1px;background:repeating-linear-gradient(to right,#888 0,#888 1px,transparent 1px,transparent 2px)"></div>
<div class="a" style="left:143px;top:178px;width:1px;height:122px;background:repeating-linear-gradient(to bottom,#888 0,#888 1px,transparent 1px,transparent 2px)"></div>
<div class="a" style="left:149px;top:188px;width:10px;height:1px;background:repeating-linear-gradient(to right,#888 0,#888 1px,transparent 1px,transparent 2px)"></div>
<div class="a" style="left:149px;top:252px;width:10px;height:1px;background:repeating-linear-gradient(to right,#888 0,#888 1px,transparent 1px,transparent 2px)"></div>
<div class="a" style="left:149px;top:300px;width:10px;height:1px;background:repeating-linear-gradient(to right,#888 0,#888 1px,transparent 1px,transparent 2px)"></div>
<div class="a" style="left:163px;top:196px;width:1px;height:41px;background:repeating-linear-gradient(to bottom,#888 0,#888 1px,transparent 1px,transparent 2px)"></div>
<div class="a" style="left:164px;top:204px;width:15px;height:1px;background:repeating-linear-gradient(to right,#888 0,#888 1px,transparent 1px,transparent 2px)"></div>
<div class="a" style="left:164px;top:220px;width:15px;height:1px;background:repeating-linear-gradient(to right,#888 0,#888 1px,transparent 1px,transparent 2px)"></div>
<div class="a" style="left:164px;top:236px;width:15px;height:1px;background:repeating-linear-gradient(to right,#888 0,#888 1px,transparent 1px,transparent 2px)"></div>
<div class="a" style="left:163px;top:260px;width:1px;height:25px;background:repeating-linear-gradient(to bottom,#888 0,#888 1px,transparent 1px,transparent 2px)"></div>
<div class="a" style="left:164px;top:268px;width:15px;height:1px;background:repeating-linear-gradient(to right,#888 0,#888 1px,transparent 1px,transparent 2px)"></div>
<div class="a" style="left:164px;top:284px;width:15px;height:1px;background:repeating-linear-gradient(to right,#888 0,#888 1px,transparent 1px,transparent 2px)"></div>
<div class="a" style="left:163px;top:308px;width:1px;height:57px;background:repeating-linear-gradient(to bottom,#888 0,#888 1px,transparent 1px,transparent 2px)"></div>
<div class="a" style="left:164px;top:316px;width:15px;height:1px;background:repeating-linear-gradient(to right,#888 0,#888 1px,transparent 1px,transparent 2px)"></div>
<div class="a" style="left:164px;top:332px;width:15px;height:1px;background:repeating-linear-gradient(to right,#888 0,#888 1px,transparent 1px,transparent 2px)"></div>
<div class="a" style="left:164px;top:348px;width:15px;height:1px;background:repeating-linear-gradient(to right,#888 0,#888 1px,transparent 1px,transparent 2px)"></div>
<div class="a" style="left:164px;top:364px;width:15px;height:1px;background:repeating-linear-gradient(to right,#888 0,#888 1px,transparent 1px,transparent 2px)"></div>
<svg style="left:119px;top:168px" width="9" height="9"><rect x="0.5" y="0.5" width="8" height="8" rx="1.2" fill="#f4f4f4" stroke="#919191"/><rect x="1" y="1" width="7" height="3.5" fill="#fff"/><path d="M2 4.500h5" stroke="#3a52a8"/></svg>
<svg style="left:139px;top:184px" width="9" height="9"><rect x="0.5" y="0.5" width="8" height="8" rx="1.2" fill="#f4f4f4" stroke="#919191"/><rect x="1" y="1" width="7" height="3.5" fill="#fff"/><path d="M2 4.500h5" stroke="#3a52a8"/></svg>
<svg style="left:139px;top:248px" width="9" height="9"><rect x="0.5" y="0.5" width="8" height="8" rx="1.2" fill="#f4f4f4" stroke="#919191"/><rect x="1" y="1" width="7" height="3.5" fill="#fff"/><path d="M2 4.500h5" stroke="#3a52a8"/></svg>
<svg style="left:139px;top:296px" width="9" height="9"><rect x="0.5" y="0.5" width="8" height="8" rx="1.2" fill="#f4f4f4" stroke="#919191"/><rect x="1" y="1" width="7" height="3.5" fill="#fff"/><path d="M2 4.500h5" stroke="#3a52a8"/></svg>
<svg style="left:119px;top:424px" width="9" height="9"><rect x="0.5" y="0.5" width="8" height="8" rx="1.2" fill="#f4f4f4" stroke="#919191"/><rect x="1" y="1" width="7" height="3.5" fill="#fff"/><path d="M2 4.500h5" stroke="#3a52a8"/><path d="M4.5 2v5" stroke="#3a52a8"/></svg>
<svg style="left:119px;top:440px" width="9" height="9"><rect x="0.5" y="0.5" width="8" height="8" rx="1.2" fill="#f4f4f4" stroke="#919191"/><rect x="1" y="1" width="7" height="3.5" fill="#fff"/><path d="M2 4.500h5" stroke="#3a52a8"/><path d="M4.5 2v5" stroke="#3a52a8"/></svg>
<svg style="left:135px;top:167px" width="17" height="11"><path d="M0.8 5.200q7.5-8.5 15 0q-7.5 8.5-15 0z" fill="#fff" stroke="#000" stroke-width="1.4"/><circle cx="8.3" cy="5" r="3.3" fill="#000"/><circle cx="9.2" cy="4.2" r="1" fill="#999"/></svg>
<svg style="left:135px;top:373px" width="16" height="14" shape-rendering="crispEdges"><rect x="0.5" y="0.5" width="15" height="13" fill="#fff" stroke="#000"/><rect x="2.5" y="2.5" width="3" height="3" fill="none" stroke="#000"/><path d="M3 8l3 1.500l-3 1.500z" fill="none" stroke="#000" shape-rendering="auto" stroke-width=".8"/><path d="M7.5 3.500h2M10.5 3.500h3M7.5 6.500h4M12.5 6.500h1M7.5 9.500h2M10.5 9.500h3M7.5 11.500h3" stroke="#000"/></svg>
<svg style="left:136px;top:389px" width="15" height="14" shape-rendering="crispEdges"><rect x="0.5" y="0.5" width="13" height="13" fill="#fff" stroke="#000"/><path d="M2 2.500h10" stroke="#000"/><path d="M0.5 4.500h13M0.5 7.500h13M0.5 10.500h13M4.5 4.500v9M9.5 4.500v9" stroke="#000"/></svg>
<svg style="left:136px;top:406px" width="15" height="11" shape-rendering="crispEdges"><rect x="0.5" y="0.5" width="14" height="10" fill="#fff" stroke="#000"/><path d="M11.5 0.500v10" stroke="#000"/><path d="M12.5 3.500h2M12.5 5.500h2M12.5 7.500h2" stroke="#bbb"/></svg>
<svg style="left:137px;top:421px" width="15" height="14"><path d="M1 5.500q1.5-1.5 3 0v7q-1.5 1.5-3 0z" fill="#fff" stroke="#000" stroke-width="1.1"/><path d="M6.5 3l6-2v7l-6 2z" fill="#fff" stroke="#000" stroke-width="1.2"/><path d="M9.5 2v7M6.5 6.500l6-2" stroke="#000" stroke-width="1.1"/></svg>
<svg style="left:135px;top:436px" width="16" height="15" shape-rendering="crispEdges"><rect x="0.5" y="0.5" width="15" height="14" fill="#fff" stroke="#000" stroke-dasharray="3 1.5"/><rect x="3.5" y="3.5" width="3" height="4" fill="none" stroke="#000"/><rect x="3.5" y="9.5" width="3" height="2" fill="none" stroke="#000"/><rect x="9.5" y="3.5" width="3" height="8" fill="none" stroke="#000"/></svg>
<svg style="left:135px;top:455px" width="15" height="10" shape-rendering="crispEdges"><rect x="0.5" y="0.5" width="14" height="9" fill="#fff" stroke="#000"/></svg>

<!-- text -->
<div class="t" style="left:26.0px;top:6.9px;font-size:12px;line-height:12px;letter-spacing:-0.04px;color:#000;">Revit Architecture 2009 - [Project1 - Floor Plan: Piso 0]</div>
<div class="t" style="left:34.5px;top:30.8px;font-size:12px;line-height:12px;letter-spacing:-0.46px;color:#000;">File</div>
<div class="t" style="left:66.7px;top:30.8px;font-size:12px;line-height:12px;letter-spacing:-0.47px;color:#000;">Edit</div>
<div class="t" style="left:100.2px;top:30.8px;font-size:12px;line-height:12px;letter-spacing:-0.37px;color:#000;">View</div>
<div class="t" style="left:139.6px;top:30.8px;font-size:12px;line-height:12px;letter-spacing:0.17px;color:#000;">Modelling</div>
<div class="t" style="left:207.0px;top:30.8px;font-size:12px;line-height:12px;letter-spacing:0.08px;color:#000;">Drafting</div>
<div class="t" style="left:264.5px;top:30.8px;font-size:12px;line-height:12px;letter-spacing:-0.47px;color:#000;">Site</div>
<div class="t" style="left:297.5px;top:30.8px;font-size:12px;line-height:12px;letter-spacing:0.06px;color:#000;">Tools</div>
<div class="t" style="left:340.0px;top:30.8px;font-size:12px;line-height:12px;letter-spacing:-0.19px;color:#000;">Settings</div>
<div class="t" style="left:396.5px;top:30.8px;font-size:12px;line-height:12px;letter-spacing:0.14px;color:#000;">Window</div>
<div class="t" style="left:454.7px;top:30.8px;font-size:12px;line-height:12px;letter-spacing:-0.27px;color:#000;">Help</div>
<div class="t" style="left:557.2px;top:56.1px;font-size:11px;line-height:11px;letter-spacing:-0.43px;color:#000;">3D</div>
<div class="t" style="left:41.5px;top:87.2px;font-size:11px;line-height:11px;letter-spacing:-0.53px;color:#000;">Plane</div>
<div class="t" style="left:435.5px;top:87.2px;font-size:11px;line-height:11px;letter-spacing:-0.49px;color:#000;">Align</div>
<div class="t" style="left:489.0px;top:87.2px;font-size:11px;line-height:11px;letter-spacing:-0.48px;color:#000;">Split</div>
<div class="t" style="left:540.5px;top:87.2px;font-size:11px;line-height:11px;letter-spacing:-0.52px;color:#000;">Trim</div>
<div class="t" style="left:590.5px;top:87.2px;font-size:11px;line-height:11px;letter-spacing:-0.28px;color:#000;">Offset</div>
<div class="t" style="left:353.0px;top:87.2px;font-size:11px;line-height:11px;letter-spacing:-0.96px;color:#a0a0a0;font-weight:700;text-shadow:0.9px 0 0 #a0a0a0,1px 1px 0 #fff,1.9px 1px 0 #fff;">Demolish</div>
<div class="t" style="left:653.3px;top:56.7px;font-size:11px;line-height:11px;letter-spacing:-0.56px;color:#a0a0a0;font-weight:700;text-shadow:0.9px 0 0 #a0a0a0,1px 1px 0 #fff,1.9px 1px 0 #fff;">Move</div>
<div class="t" style="left:710.3px;top:56.7px;font-size:11px;line-height:11px;letter-spacing:-0.85px;color:#a0a0a0;font-weight:700;text-shadow:0.9px 0 0 #a0a0a0,1px 1px 0 #fff,1.9px 1px 0 #fff;">Copy</div>
<div class="t" style="left:766.0px;top:56.7px;font-size:11px;line-height:11px;letter-spacing:-0.54px;color:#a0a0a0;font-weight:700;text-shadow:0.9px 0 0 #a0a0a0,1px 1px 0 #fff,1.9px 1px 0 #fff;">Rotate</div>
<div class="t" style="left:828.6px;top:56.7px;font-size:11px;line-height:11px;letter-spacing:-1.07px;color:#a0a0a0;font-weight:700;text-shadow:0.9px 0 0 #a0a0a0,1px 1px 0 #fff,1.9px 1px 0 #fff;">Array</div>
<div class="t" style="left:884.3px;top:56.7px;font-size:11px;line-height:11px;letter-spacing:-0.98px;color:#a0a0a0;font-weight:700;text-shadow:0.9px 0 0 #a0a0a0,1px 1px 0 #fff,1.9px 1px 0 #fff;">Mirror</div>
<div class="t" style="left:34.0px;top:146.8px;font-size:12px;line-height:12px;letter-spacing:-0.35px;color:#000;">Sketch</div>
<div class="t" style="left:29.5px;top:167.8px;font-size:12px;line-height:12px;letter-spacing:0.29px;color:#000;">Modify</div>
<div class="t" style="left:29.5px;top:189.6px;font-size:12px;line-height:12px;letter-spacing:-0.07px;color:#000;">Dimension</div>
<div class="t" style="left:29.5px;top:211.6px;font-size:12px;line-height:12px;letter-spacing:-0.48px;color:#000;">Ref Plane</div>
<div class="t" style="left:29.5px;top:233.6px;font-size:12px;line-height:12px;letter-spacing:-0.20px;color:#000;">Boundary</div>
<div class="t" style="left:29.5px;top:255.7px;font-size:12px;line-height:12px;letter-spacing:-0.76px;color:#000;">Riser</div>
<div class="t" style="left:30.6px;top:278.4px;font-size:12px;line-height:12px;letter-spacing:-0.64px;color:#000;">Run</div>
<div class="t" style="left:29.3px;top:305.6px;font-size:12px;line-height:12px;letter-spacing:-0.38px;color:#000;width:71.9px;overflow:hidden;">Set Work Plane</div>
<div class="t" style="left:29.3px;top:327.5px;font-size:12px;line-height:12px;letter-spacing:-0.30px;color:#000;width:71.9px;overflow:hidden;">Stairs Properties</div>
<div class="t" style="left:29.5px;top:349.5px;font-size:12px;line-height:12px;letter-spacing:-0.18px;color:#000;">Railings Type</div>
<div class="t" style="left:29.5px;top:378.1px;font-size:12px;line-height:12px;letter-spacing:-0.30px;color:#000;">Finish Sketch</div>
<div class="t" style="left:29.5px;top:400.2px;font-size:12px;line-height:12px;letter-spacing:-0.18px;color:#000;">Quit Sketch</div>
<div class="t" style="left:113.7px;top:146.5px;font-size:12px;line-height:12px;letter-spacing:-0.11px;color:#5a6a84;">Project1 - Project bro...</div>
<div class="t" style="left:157.3px;top:167.1px;font-size:11px;line-height:11px;letter-spacing:-0.33px;color:#000;">Views (all)</div>
<div class="t" style="left:161.2px;top:183.1px;font-size:11px;line-height:11px;letter-spacing:-0.42px;color:#000;">Floor Plans</div>
<div class="t" style="left:181.4px;top:199.1px;font-size:11px;line-height:11px;letter-spacing:0.37px;color:#000;font-weight:700;">Piso 0</div>
<div class="t" style="left:181.4px;top:215.1px;font-size:11px;line-height:11px;letter-spacing:-0.41px;color:#000;">Piso 1</div>
<div class="t" style="left:181.4px;top:231.1px;font-size:11px;line-height:11px;letter-spacing:-0.52px;color:#000;">Site</div>
<div class="t" style="left:160.8px;top:247.1px;font-size:11px;line-height:11px;letter-spacing:-0.37px;color:#000;">Ceiling Plans</div>
<div class="t" style="left:181.4px;top:263.1px;font-size:11px;line-height:11px;letter-spacing:-0.35px;color:#000;">Piso 0</div>
<div class="t" style="left:181.4px;top:279.1px;font-size:11px;line-height:11px;letter-spacing:-0.41px;color:#000;">Piso 1</div>
<div class="t" style="left:161.2px;top:295.1px;font-size:11px;line-height:11px;letter-spacing:-0.29px;color:#000;">Elevations (Building</div>
<div class="t" style="left:181.7px;top:311.1px;font-size:11px;line-height:11px;letter-spacing:-0.32px;color:#000;">Alç. Posterior</div>
<div class="t" style="left:181.7px;top:327.1px;font-size:11px;line-height:11px;letter-spacing:-0.31px;color:#000;">Alç. Principal</div>
<div class="t" style="left:181.7px;top:343.1px;font-size:11px;line-height:11px;letter-spacing:-0.25px;color:#000;">Alç.Lat.Direito</div>
<div class="t" style="left:181.7px;top:359.1px;font-size:11px;line-height:11px;letter-spacing:-0.26px;color:#000;">Alç.Lat.Esquerd</div>
<div class="t" style="left:157.5px;top:375.1px;font-size:11px;line-height:11px;letter-spacing:-0.36px;color:#000;">Legends</div>
<div class="t" style="left:157.5px;top:391.1px;font-size:11px;line-height:11px;letter-spacing:-0.13px;color:#000;">Schedules/Quantitie</div>
<div class="t" style="left:157.5px;top:407.1px;font-size:11px;line-height:11px;letter-spacing:-0.35px;color:#000;">Sheets (all)</div>
<div class="t" style="left:157.5px;top:423.1px;font-size:11px;line-height:11px;letter-spacing:-0.68px;color:#000;">Families</div>
<div class="t" style="left:157.3px;top:439.1px;font-size:11px;line-height:11px;letter-spacing:-0.53px;color:#000;">Groups</div>
<div class="t" style="left:157.5px;top:455.1px;font-size:11px;line-height:11px;letter-spacing:-0.18px;color:#000;">Revit Links</div>
<svg style="left:0;top:0;pointer-events:none" width="954" height="894" viewBox="0 0 954 894">
<defs><filter id="sh" x="-20%" y="-20%" width="150%" height="150%"><feGaussianBlur in="SourceAlpha" stdDeviation="2.6"/><feOffset dx="3" dy="3"/><feComponentTransfer><feFuncA type="linear" slope="0.8"/></feComponentTransfer><feMerge><feMergeNode/><feMergeNode in="SourceGraphic"/></feMerge></filter></defs>
<g filter="url(#sh)" fill="#fe0000" stroke="#fe0000" stroke-width="1" stroke-linejoin="round">
<path d="M505.0 439.2 L506.6 420.7 L502.0 425.0 L445.9 297.2 A4.3 4.3 0 0 0 438.1 300.8 L496.4 427.5 L490.2 428.1 Z"/>
<path d="M87.8 239.3 L104.8 248.5 L103.2 242.1 L148.1 242.4 A4.5 4.5 0 0 0 147.9 233.4 L103.0 235.7 L104.4 229.3 Z"/>
<path d="M64.4 261.9 L79.7 272.1 L78.6 266.5 L128.6 271.5 A4.7 4.7 0 0 0 129.4 262.1 L79.1 259.5 L81.0 254.1 Z"/>
<path d="M65.9 286.2 L82.5 295.2 L80.9 289.6 L139.1 289.9 A4.6 4.6 0 0 0 138.9 280.7 L80.9 282.4 L82.3 276.8 Z"/>
</g>
<rect x="252.1" y="112.1" width="71.8" height="32.7" fill="none" stroke="#fe0000" stroke-width="4.2" filter="url(#sh)"/>
</svg>

</body></html>
